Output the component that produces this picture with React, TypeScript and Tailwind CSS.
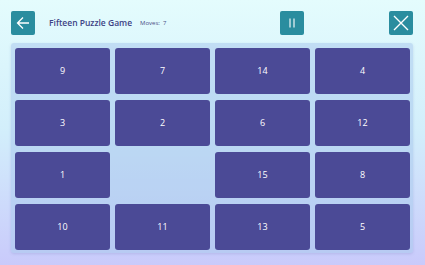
const tiles = [9, 7, 14, 4, 3, 2, 6, 12, 1, 0, 15, 8, 10, 11, 13, 5];

function IconButton({ children }: { children: React.ReactNode }) {
  return (
    <button className="flex h-6 w-6 items-center justify-center rounded-[2px] bg-[#2a8d9f] text-white">
      {children}
    </button>
  );
}

export default function App() {
  return (
    <div
      className="flex h-[265px] w-[425px] flex-col overflow-hidden bg-gradient-to-b from-[#e4fcfd] via-[#d2eefb] to-[#c9cafb]"
      style={{ fontFamily: '"Open Sans", "Noto Sans", sans-serif' }}
    >
      {/* Header */}
      <div className="box-content flex h-6 items-center pl-[11px] pr-[12px] pt-[11px]">
        <IconButton>
          <svg width="16" height="16" viewBox="0 0 16 16" fill="none" stroke="currentColor" strokeWidth="1.3">
            <path d="M14 8H2.5M8 2.5L2.5 8L8 13.5" />
          </svg>
        </IconButton>
        <span className="ml-[14px] text-[8.5px] font-semibold text-[#3d4385]">Fifteen Puzzle Game</span>
        <span className="ml-[8px] text-[6px] text-[#4a4f86]">Moves:&nbsp;&nbsp;7</span>
        <div className="flex-1" />
        <IconButton>
          <svg width="10" height="14" viewBox="0 0 10 14" fill="none" stroke="currentColor" strokeWidth="1.1">
            <path d="M3 2.5V11.5M7 2.5V11.5" />
          </svg>
        </IconButton>
        <div className="ml-[85px]">
          <IconButton>
            <svg width="18" height="18" viewBox="0 0 18 18" fill="none" stroke="currentColor" strokeWidth="1.4">
              <path d="M2 2L16 16M16 2L2 16" />
            </svg>
          </IconButton>
        </div>
      </div>

      {/* Board */}
      <div className="ml-[11px] mr-[12px] mt-[8px] grid grid-cols-4 gap-x-[5px] gap-y-[6px] rounded-[3px] bg-[#a9c9ec]/55 pb-[3px] pl-[4px] pr-[3px] pt-[5px] shadow-[0_1px_3px_rgba(80,90,160,0.18)]">
        {tiles.map((n, i) =>
          n === 0 ? (
            <div key={i} className="h-[46px] w-[95px]" />
          ) : (
            <div
              key={i}
              className="flex h-[46px] w-[95px] items-center justify-center rounded-[3px] bg-[#4b4a96] text-[9px] font-medium text-white"
            >
              {n}
            </div>
          )
        )}
      </div>
    </div>
  );
}
